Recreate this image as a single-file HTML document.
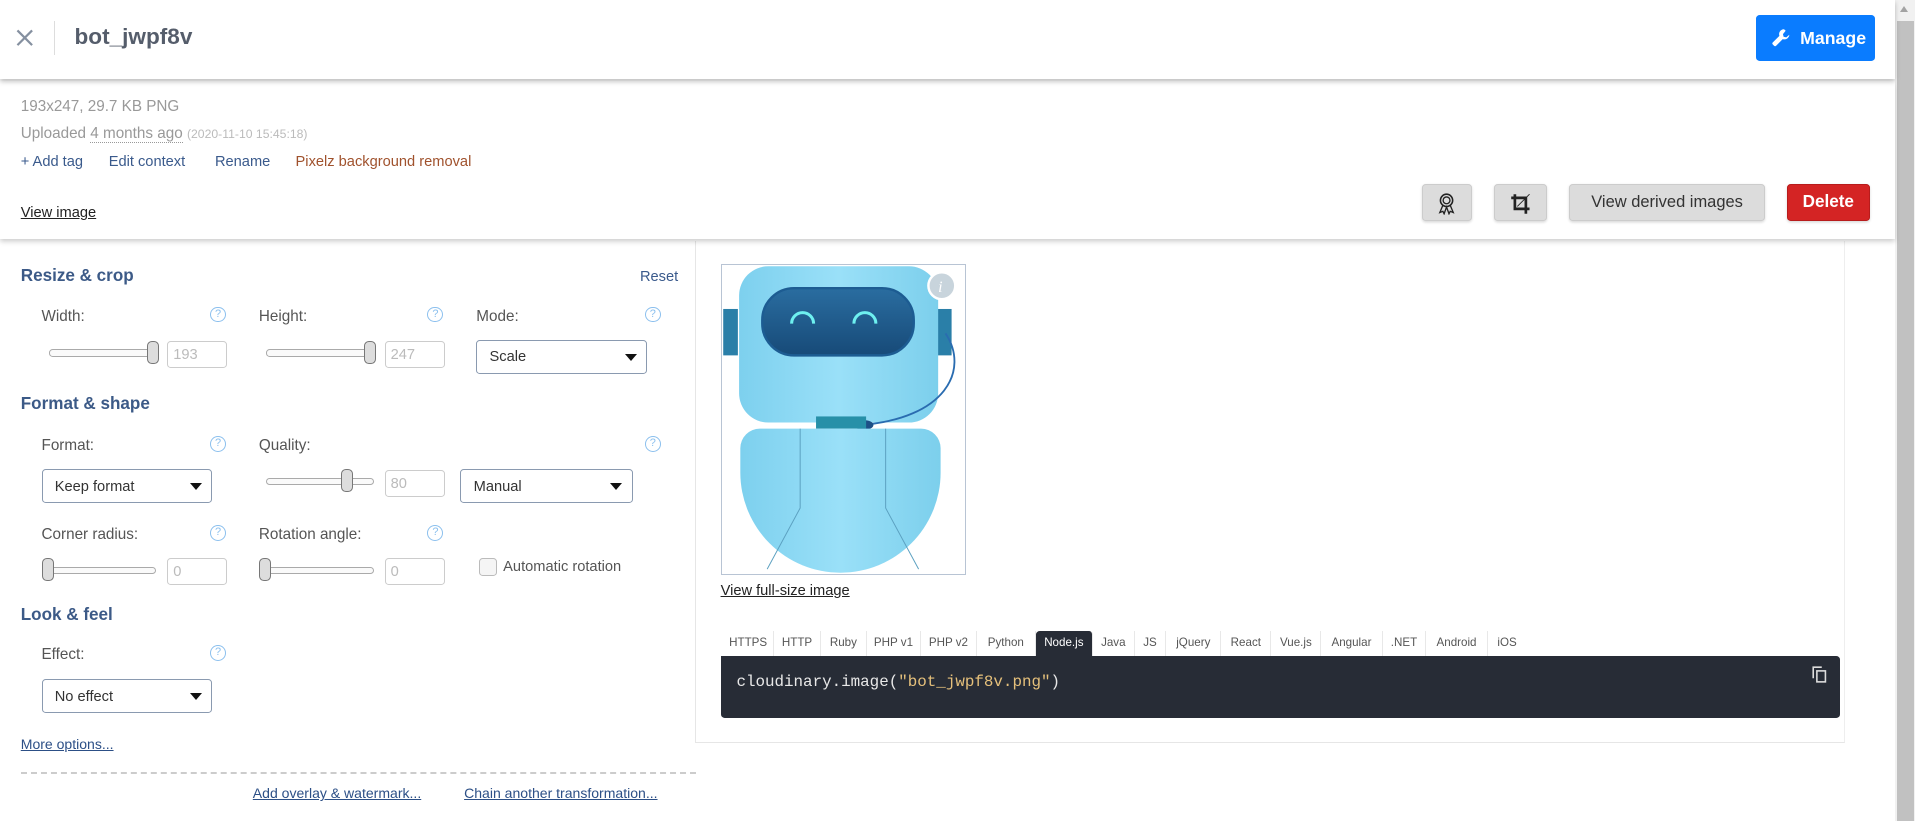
<!DOCTYPE html>
<html><head><meta charset="utf-8">
<style>
*{box-sizing:border-box;margin:0;padding:0}
html,body{width:1915px;height:821px;overflow:hidden;background:#fff}
#w{zoom:1.22130;width:1568px;height:672px;position:relative;font-family:"Liberation Sans",sans-serif;color:#555}
.a{position:absolute;white-space:nowrap}
.hdr{left:0;top:0;width:1552px;height:65px;background:#fff;box-shadow:0 2px 4px rgba(0,0,0,.25);z-index:3}
.info{left:0;top:66px;width:1552px;height:130px;background:#fff;box-shadow:0 2px 4px rgba(0,0,0,.2);z-index:2}
.lnk{color:#3a5a8c;font-size:12px}
.btn{background:#dcdcdc;border:1px solid #ccc;border-radius:3px;box-shadow:0 1px 2px rgba(0,0,0,.15);height:30px;top:151px;text-align:center;line-height:28px;font-size:14px;color:#333}
.h{font-size:14px;font-weight:bold;color:#3c5a87}
.lbl{font-size:12.5px;color:#555}
.q{width:13px;height:13px;border:1px solid #8cc0ee;border-radius:50%;color:#8cc0ee;font-size:9px;text-align:center;line-height:11px}
.trk{height:6px;border:1px solid #aaa;border-radius:3px;background:#fafafa}
.th{width:10px;height:19px;border:1px solid #777;border-radius:4px;background:#ddd}
.inp{width:49px;height:22px;border:1px solid #ccc;border-radius:3px;font-size:12px;color:#bbb;padding:4px 4px}
.sel{height:28px;border:1px solid #8a9ab0;border-radius:3px;font-size:12px;color:#333;padding:7px 10px}
.sel:after{content:"";position:absolute;right:8px;top:11px;border:5px solid transparent;border-top:6px solid #111}
.u{text-decoration:underline;font-size:12px}
.tab{top:517px;height:20px;font-size:9.5px;color:#555;line-height:20px;text-align:center;border-right:1px solid #e8e8e8}
</style></head><body><div id="w">
<div class="a hdr">
 <svg class="a" style="left:12px;top:23px" width="16" height="16" viewBox="0 0 16 16"><path d="M2 2L14 14M14 2L2 14" stroke="#8590a0" stroke-width="1.8"/></svg>
 <div class="a" style="left:44px;top:17px;width:1px;height:28px;background:#ddd"></div>
 <div class="a" style="left:61px;top:20px;font-size:18.5px;font-weight:bold;color:#555d6b">bot_jwpf8v</div>
 <div class="a" style="left:1438px;top:12px;width:97px;height:38px;background:#0a7cff;border-radius:3px;color:#fff;font-weight:bold;font-size:14.5px;line-height:38px;padding-left:36px">Manage
  <svg class="a" style="left:12px;top:11px" width="16" height="16" viewBox="0 0 16 16"><path d="M10.5 1a4 4 0 0 0-3.6 5.4L1.5 11.8a1.2 1.2 0 0 0 0 1.7l1 1a1.2 1.2 0 0 0 1.7 0l5.4-5.4A4 4 0 0 0 15 5.5l-2.5 2.2-2.2-.5-.5-2.2L12 2.3A4 4 0 0 0 10.5 1z" fill="#fff"/></svg></div>
</div>
<div class="a" style="left:1552px;top:0;width:16px;height:672px;background:#f1f1f1"><div class="a" style="left:1px;top:17px;width:14px;height:655px;background:#c1c1c1"></div><div class="a" style="left:4px;top:5px;border:4px solid transparent;border-bottom:5px solid #a3a3a3;border-top:0"></div></div>
<div class="a info">
 <div class="a" style="left:17px;top:14px;font-size:12.5px;color:#999">193x247, 29.7 KB PNG</div>
 <div class="a" style="left:17px;top:36px;font-size:12.5px;color:#999">Uploaded <span style="border-bottom:1px dotted #999">4 months ago</span> <span style="font-size:10px;color:#bbb">(2020-11-10 15:45:18)</span></div>
 <div class="a lnk" style="left:17px;top:60px">+ Add tag</div>
 <div class="a lnk" style="left:89px;top:60px">Edit context</div>
 <div class="a lnk" style="left:176px;top:60px">Rename</div>
 <div class="a" style="left:242px;top:60px;font-size:12px;color:#a0522d">Pixelz background removal</div>
 <div class="a u" style="left:17px;top:102px;color:#222">View image</div>
</div>
<div class="a btn" style="left:1164px;width:41px;z-index:4"><svg style="margin-top:6px" width="14" height="18" viewBox="0 0 14 18"><circle cx="7" cy="6" r="5" fill="none" stroke="#222" stroke-width="1.3"/><circle cx="7" cy="6" r="2.8" fill="none" stroke="#222" stroke-width="1.1"/><path d="M4 10L1.5 16 4 15 5 17 7 11.5 9 17 10 15 12.5 16 10 10" fill="none" stroke="#222" stroke-width="1.1"/></svg></div>
<div class="a btn" style="left:1223px;width:44px;z-index:4"><svg style="margin-top:6px" width="18" height="18" viewBox="0 0 18 18"><path d="M4 1V13H16M1 4H13V17" fill="none" stroke="#222" stroke-width="2.2"/><path d="M6 11L16 1" stroke="#222" stroke-width=".7"/></svg></div>
<div class="a btn" style="left:1285px;width:160px;z-index:4;font-size:13.5px">View derived images</div>
<div class="a btn" style="left:1463px;width:68px;background:#d42424;border-color:#b81c1c;color:#fff;font-weight:bold;z-index:4">Delete</div>

<div class="a h" style="left:17px;top:218px">Resize &amp; crop</div>
<div class="a lnk" style="left:524px;top:220px">Reset</div>
<div class="a lbl" style="left:34px;top:252px">Width:</div><div class="a q" style="left:172px;top:251px">?</div>
<div class="a lbl" style="left:212px;top:252px">Height:</div><div class="a q" style="left:350px;top:251px">?</div>
<div class="a lbl" style="left:390px;top:252px">Mode:</div><div class="a q" style="left:528px;top:251px">?</div>
<div class="a trk" style="left:40px;top:286px;width:88px"></div><div class="a th" style="left:120px;top:279px"></div><div class="a inp" style="left:137px;top:279px">193</div>
<div class="a trk" style="left:218px;top:286px;width:88px"></div><div class="a th" style="left:298px;top:279px"></div><div class="a inp" style="left:315px;top:279px">247</div>
<div class="a sel" style="left:390px;top:278px;width:140px">Scale</div>

<div class="a h" style="left:17px;top:323px">Format &amp; shape</div>
<div class="a lbl" style="left:34px;top:358px">Format:</div><div class="a q" style="left:172px;top:357px">?</div>
<div class="a lbl" style="left:212px;top:358px">Quality:</div><div class="a q" style="left:528px;top:357px">?</div>
<div class="a sel" style="left:34px;top:384px;width:140px">Keep format</div>
<div class="a trk" style="left:218px;top:391px;width:88px"></div><div class="a th" style="left:279px;top:384px"></div><div class="a inp" style="left:315px;top:385px">80</div>
<div class="a sel" style="left:377px;top:384px;width:141px">Manual</div>
<div class="a lbl" style="left:34px;top:431px">Corner radius:</div><div class="a q" style="left:172px;top:430px">?</div>
<div class="a lbl" style="left:212px;top:431px">Rotation angle:</div><div class="a q" style="left:350px;top:430px">?</div>
<div class="a trk" style="left:40px;top:464px;width:88px"></div><div class="a th" style="left:34px;top:457px"></div><div class="a inp" style="left:137px;top:457px">0</div>
<div class="a trk" style="left:218px;top:464px;width:88px"></div><div class="a th" style="left:212px;top:457px"></div><div class="a inp" style="left:315px;top:457px">0</div>
<div class="a" style="left:392px;top:457px;width:15px;height:15px;border:1px solid #bbb;border-radius:3px;background:#f5f5f5"></div>
<div class="a lbl" style="left:412px;top:458px;font-size:12px">Automatic rotation</div>

<div class="a h" style="left:17px;top:495px">Look &amp; feel</div>
<div class="a lbl" style="left:34px;top:529px">Effect:</div><div class="a q" style="left:172px;top:528px">?</div>
<div class="a sel" style="left:34px;top:556px;width:140px">No effect</div>
<div class="a u" style="left:17px;top:603px;color:#2c4f86;font-size:11.5px">More options...</div>
<div class="a" style="left:17px;top:632px;width:553px;border-top:2px dashed #ccc"></div>
<div class="a u" style="left:207px;top:643px;color:#2c4f86;font-size:11.5px">Add overlay &amp; watermark...</div>
<div class="a u" style="left:380px;top:643px;color:#2c4f86;font-size:11.5px">Chain another transformation...</div>

<div class="a" style="left:569px;top:197px;width:942px;height:411px;border-left:1px solid #e6e6e6;border-right:1px solid #eee;border-bottom:1px solid #e6e6e6"></div>
<div class="a" style="left:590px;top:216px;width:201px;height:255px;border:1px solid #b8c4d4;background:#fff;overflow:hidden">
<svg width="199" height="253" viewBox="0 0 199 253">
<defs><linearGradient id="g" x1="0" x2="1"><stop offset="0" stop-color="#7dd0ee"/><stop offset=".5" stop-color="#9ae0f8"/><stop offset="1" stop-color="#7ccfec"/></linearGradient>
<linearGradient id="v" x1="0" y1="0" x2="0" y2="1"><stop offset="0" stop-color="#2a6da0"/><stop offset="1" stop-color="#174a78"/></linearGradient></defs>
<rect x="1" y="36" width="12" height="38" fill="#2a7fa8"/><rect x="176" y="36" width="12" height="38" fill="#2a7fa8"/>
<rect x="14" y="1" width="163" height="128" rx="24" fill="url(#g)"/>
<rect x="33" y="19" width="124" height="55" rx="26" fill="url(#v)" stroke="#1d5c92" stroke-width="2"/>
<path d="M57 48a9 9 0 0 1 18 0M108 48a9 9 0 0 1 18 0" fill="none" stroke="#6ef0f0" stroke-width="2.5"/>
<path d="M183 56c20 30 0 70-70 75" fill="none" stroke="#2a6cb0" stroke-width="1.5"/>
<ellipse cx="116" cy="131" rx="8" ry="4" fill="#1d4f86"/>
<rect x="77" y="124" width="41" height="10" fill="#2790a8"/>
<path d="M15 150a16 16 0 0 1 16-16h132a16 16 0 0 1 16 16v20a82 82 0 0 1-164 0z" fill="url(#g)"/>
<path d="M64 134v65l-27 50M134 134v65l27 50" fill="none" stroke="#5ba0c0" stroke-width=".8"/>
<circle cx="180" cy="17" r="11" fill="#c8d4dc" stroke="#fff" stroke-width="2"/><text x="177" y="22" font-size="13" font-style="italic" fill="#fff" font-family="Liberation Serif">i</text>
</svg></div>
<div class="a u" style="left:590px;top:477px;color:#222">View full-size image</div>

<div class="a tab" style="left:592px;width:42px">HTTPS</div><div class="a tab" style="left:634px;width:38px">HTTP</div><div class="a tab" style="left:672px;width:38px">Ruby</div><div class="a tab" style="left:710px;width:44px">PHP v1</div><div class="a tab" style="left:754px;width:46px">PHP v2</div><div class="a tab" style="left:800px;width:48px">Python</div><div class="a tab" style="left:848px;width:47px;background:#272c36;color:#fff;border-radius:3px 3px 0 0">Node.js</div><div class="a tab" style="left:895px;width:34px">Java</div><div class="a tab" style="left:929px;width:26px">JS</div><div class="a tab" style="left:955px;width:45px">jQuery</div><div class="a tab" style="left:1000px;width:41px">React</div><div class="a tab" style="left:1041px;width:41px">Vue.js</div><div class="a tab" style="left:1082px;width:50px">Angular</div><div class="a tab" style="left:1132px;width:36px">.NET</div><div class="a tab" style="left:1168px;width:50px">Android</div><div class="a tab" style="left:1218px;width:32px;border:0">iOS</div>
<div class="a" style="left:590px;top:537px;width:917px;height:51px;background:#272c36;border-radius:0 3px 3px 3px">
 <div class="a" style="left:13px;top:14px;font-family:'Liberation Mono',monospace;font-size:13px;color:#e8e8e8">cloudinary.image(<span style="color:#e5c07b">"bot_jwpf8v.png"</span>)</div>
 <svg class="a" style="left:894px;top:8px" width="12" height="14" viewBox="0 0 12 14"><path d="M1 10V1h7" fill="none" stroke="#ddd" stroke-width="1.3"/><rect x="4" y="4" width="7" height="9" fill="none" stroke="#ddd" stroke-width="1.3"/></svg>
</div>
</div></body></html>
